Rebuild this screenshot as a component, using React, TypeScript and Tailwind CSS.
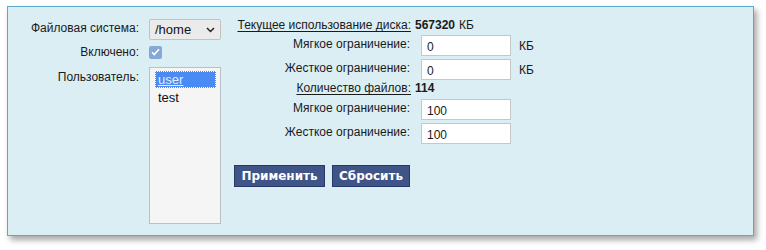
/**
 * Disk quota editor
 *
 * Panel with filesystem / user selection and soft/hard limit inputs.
 */

const FONT = "font-['Liberation_Sans',Arial,sans-serif]";

function LimitRow({ label, value, unit }: { label: string; value: string; unit?: string }) {
  return (
    <div className="flex items-center h-[21px]">
      <span className="w-[177px] text-right pr-[1px] -mt-[3px]">{label}</span>
      <div className="ml-[10px] w-[90px] h-[21px] bg-white border border-[#c4c8ca] flex items-center pl-[5px] pt-[2px]">
        {value}
      </div>
      {unit && <span className="ml-[8px]">{unit}</span>}
    </div>
  );
}

function SectionHeader({ title, value, unit }: { title: string; value: string; unit?: string }) {
  return (
    <div className="flex items-center h-[14px]">
      <span className="w-[177px] text-right">
        <span className="underline underline-offset-[2px]">{title}</span>
      </span>
      <span className="ml-[4px] font-bold">{value}</span>
      {unit && <span className="ml-[4px]">{unit}</span>}
    </div>
  );
}

export default function App() {
  return (
    <div className={`${FONT} text-[12px] text-[#1a1a1a] bg-white w-[766px] h-[250px] pl-[7px] pt-[6px]`}>
      <div className="w-[747px] h-[230px] border border-[#58a9cb] bg-[#daeef4] shadow-[3px_4px_6px_rgba(0,0,0,0.35)] flex">
        {/* Left: filesystem, enabled, user */}
        <div className="pt-[12px] w-[213px]">
          <div className="flex items-center">
            <span className="w-[131px] text-right -mt-[4px]">Файловая система:</span>
            <div className="ml-[10px] w-[72px] h-[21px] bg-[#ebebeb] border border-[#c2c2c2] rounded-[2px] flex items-center justify-between pl-[5px] pr-[5px]">
              <span className="text-[13px] text-[#111]">/home</span>
              <svg width="9" height="6" viewBox="0 0 9 6" fill="none" stroke="#222" strokeWidth="1.5">
                <path d="M1 1l3.5 3.5L8 1" />
              </svg>
            </div>
          </div>
          <div className="flex items-center mt-[3px]">
            <span className="w-[131px] text-right">Включено:</span>
            <div className="ml-[10px] w-[13px] h-[13px] rounded-[2px] bg-[#86a8d8] flex items-center justify-center">
              <svg width="9" height="8" viewBox="0 0 9 8" fill="none" stroke="white" strokeWidth="1.6">
                <path d="M1 4.2l2.3 2.3L8 1.2" />
              </svg>
            </div>
          </div>
          <div className="flex items-start mt-[6px]">
            <span className="w-[131px] text-right pt-[1px]">Пользователь:</span>
            <div className="ml-[10px] w-[72px] h-[157px] bg-[#f5f5f5] border border-[#b8c2c6] pl-[5px] pr-[4px] pt-[3px] text-[13px]">
              <div className="h-[17px] bg-[#4a8af4] border border-dotted border-white flex items-center pl-[2px]">
                <span className="underline text-[#e4edff] leading-none">user</span>
              </div>
              <div className="pl-[3px] text-[#111]">test</div>
            </div>
          </div>
        </div>

        {/* Right: usage and limits */}
        <div className="ml-[13px] pt-[11px] flex flex-col">
          <SectionHeader title="Текущее использование диска:" value="567320" unit="КБ" />
          <div className="mt-[3px] flex flex-col gap-[3px]">
            <LimitRow label="Мягкое ограничение:" value="0" unit="КБ" />
            <LimitRow label="Жесткое ограничение:" value="0" unit="КБ" />
          </div>
          <div className="mt-[1px]">
            <SectionHeader title="Количество файлов:" value="114" />
          </div>
          <div className="mt-[4px] flex flex-col gap-[3px]">
            <LimitRow label="Мягкое ограничение:" value="100" />
            <LimitRow label="Жесткое ограничение:" value="100" />
          </div>
          <div className="mt-[21px] flex gap-[7px] font-['DejaVu_Sans',sans-serif] font-bold text-[12px] text-white">
            <button className="w-[91px] h-[22px] bg-[#3f5487] border border-[#27386b]">Применить</button>
            <button className="w-[78px] h-[22px] bg-[#3f5487] border border-[#27386b]">Сбросить</button>
          </div>
        </div>
      </div>
    </div>
  );
}
